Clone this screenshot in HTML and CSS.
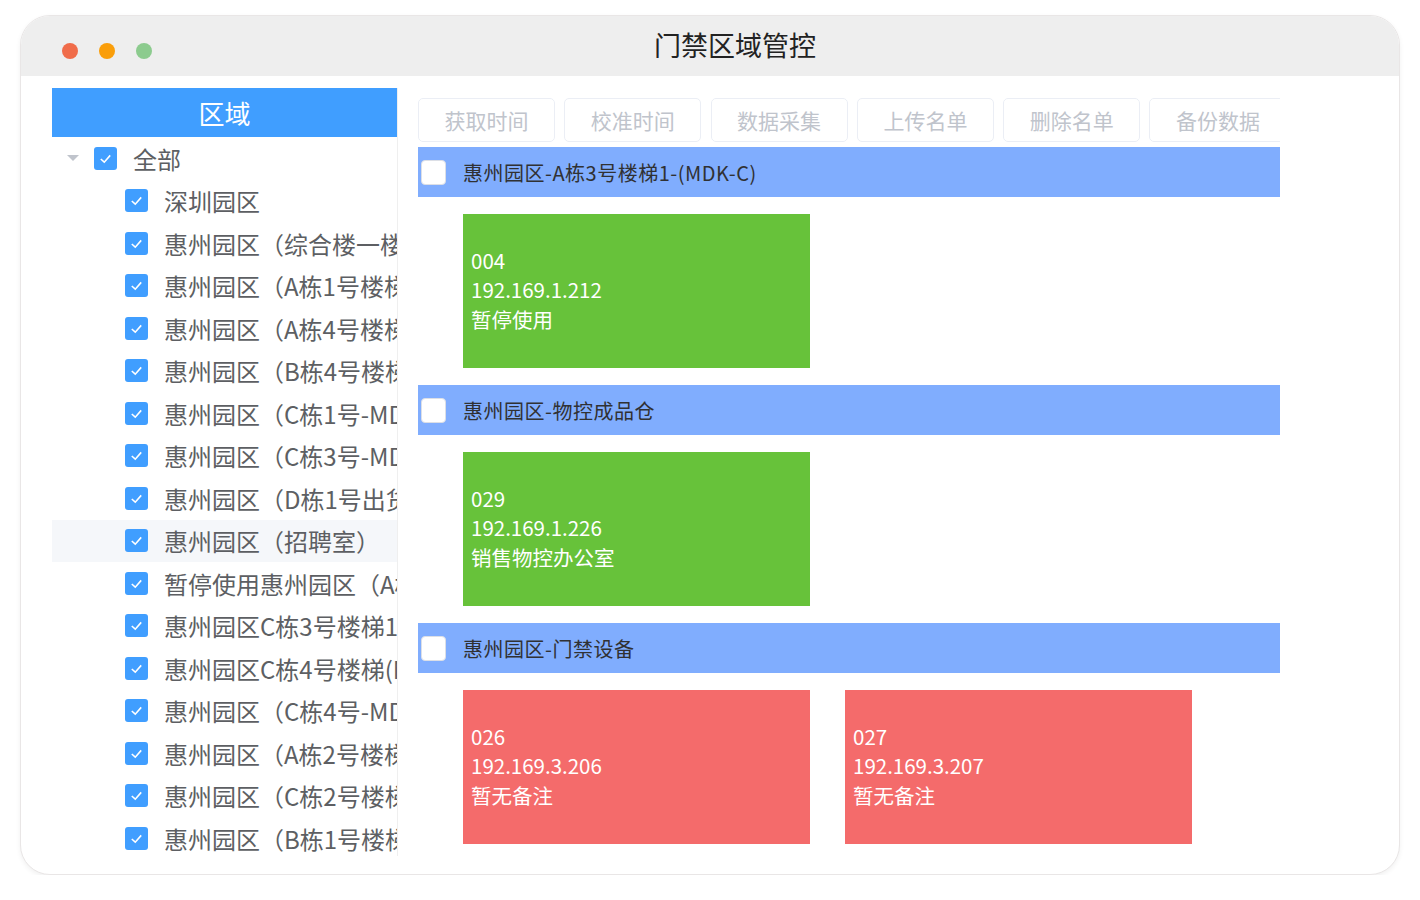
FILE: index.html
```html
<!DOCTYPE html>
<html lang="zh-CN">
<head>
    <meta charset="UTF-8">
    <title>门禁区域管控</title>
    <link rel="stylesheet" href="styles.css">
</head>
<body>
    <div class="window">
        <div class="titlebar">
            <span class="dot red"></span>
            <span class="dot yellow"></span>
            <span class="dot green"></span>
            <h1 class="title">门禁区域管控</h1>
        </div>
        <div class="content">
            <div class="sidebar">
                <div class="sidebar-head">区域</div>
                <ul class="tree">
                    <li class="tree-row root"><span class="caret"></span><span class="cb"><svg viewBox="0 0 22 22"><polyline points="6.5,11.5 9.8,14.5 15.5,8"/></svg></span>全部</li>
                    <li class="tree-row"><span class="cb"><svg viewBox="0 0 22 22"><polyline points="6.5,11.5 9.8,14.5 15.5,8"/></svg></span>深圳园区</li>
                    <li class="tree-row"><span class="cb"><svg viewBox="0 0 22 22"><polyline points="6.5,11.5 9.8,14.5 15.5,8"/></svg></span>惠州园区（综合楼一楼大厅）</li>
                    <li class="tree-row"><span class="cb"><svg viewBox="0 0 22 22"><polyline points="6.5,11.5 9.8,14.5 15.5,8"/></svg></span>惠州园区（A栋1号楼梯）</li>
                    <li class="tree-row"><span class="cb"><svg viewBox="0 0 22 22"><polyline points="6.5,11.5 9.8,14.5 15.5,8"/></svg></span>惠州园区（A栋4号楼梯）</li>
                    <li class="tree-row"><span class="cb"><svg viewBox="0 0 22 22"><polyline points="6.5,11.5 9.8,14.5 15.5,8"/></svg></span>惠州园区（B栋4号楼梯）</li>
                    <li class="tree-row"><span class="cb"><svg viewBox="0 0 22 22"><polyline points="6.5,11.5 9.8,14.5 15.5,8"/></svg></span>惠州园区（C栋1号-MDK）</li>
                    <li class="tree-row"><span class="cb"><svg viewBox="0 0 22 22"><polyline points="6.5,11.5 9.8,14.5 15.5,8"/></svg></span>惠州园区（C栋3号-MDK）</li>
                    <li class="tree-row"><span class="cb"><svg viewBox="0 0 22 22"><polyline points="6.5,11.5 9.8,14.5 15.5,8"/></svg></span>惠州园区（D栋1号出货）</li>
                    <li class="tree-row active"><span class="cb"><svg viewBox="0 0 22 22"><polyline points="6.5,11.5 9.8,14.5 15.5,8"/></svg></span>惠州园区（招聘室）</li>
                    <li class="tree-row"><span class="cb"><svg viewBox="0 0 22 22"><polyline points="6.5,11.5 9.8,14.5 15.5,8"/></svg></span>暂停使用惠州园区（A栋）</li>
                    <li class="tree-row"><span class="cb"><svg viewBox="0 0 22 22"><polyline points="6.5,11.5 9.8,14.5 15.5,8"/></svg></span>惠州园区C栋3号楼梯1</li>
                    <li class="tree-row"><span class="cb"><svg viewBox="0 0 22 22"><polyline points="6.5,11.5 9.8,14.5 15.5,8"/></svg></span>惠州园区C栋4号楼梯(MDK)</li>
                    <li class="tree-row"><span class="cb"><svg viewBox="0 0 22 22"><polyline points="6.5,11.5 9.8,14.5 15.5,8"/></svg></span>惠州园区（C栋4号-MDK）</li>
                    <li class="tree-row"><span class="cb"><svg viewBox="0 0 22 22"><polyline points="6.5,11.5 9.8,14.5 15.5,8"/></svg></span>惠州园区（A栋2号楼梯）</li>
                    <li class="tree-row"><span class="cb"><svg viewBox="0 0 22 22"><polyline points="6.5,11.5 9.8,14.5 15.5,8"/></svg></span>惠州园区（C栋2号楼梯）</li>
                    <li class="tree-row"><span class="cb"><svg viewBox="0 0 22 22"><polyline points="6.5,11.5 9.8,14.5 15.5,8"/></svg></span>惠州园区（B栋1号楼梯）</li>
                </ul>
            </div>
            <div class="main">
                <div class="toolbar">
                    <button class="tool-btn">获取时间</button>
                    <button class="tool-btn">校准时间</button>
                    <button class="tool-btn">数据采集</button>
                    <button class="tool-btn">上传名单</button>
                    <button class="tool-btn">删除名单</button>
                    <button class="tool-btn">备份数据</button>
                </div>

                <div class="group-head"><span class="group-cb"></span>惠州园区-A栋3号楼梯1-(MDK-C)</div>
                <div class="cards">
                    <div class="card ok">
                        <span>004</span>
                        <span>192.169.1.212</span>
                        <span>暂停使用</span>
                    </div>
                </div>

                <div class="group-head"><span class="group-cb"></span>惠州园区-物控成品仓</div>
                <div class="cards">
                    <div class="card ok">
                        <span>029</span>
                        <span>192.169.1.226</span>
                        <span>销售物控办公室</span>
                    </div>
                </div>

                <div class="group-head"><span class="group-cb"></span>惠州园区-门禁设备</div>
                <div class="cards">
                    <div class="card off">
                        <span>026</span>
                        <span>192.169.3.206</span>
                        <span>暂无备注</span>
                    </div>
                    <div class="card off">
                        <span>027</span>
                        <span>192.169.3.207</span>
                        <span>暂无备注</span>
                    </div>
                </div>
            </div>
        </div>
    </div>
</body>
</html>
```

FILE: styles.css
```css
* {
    margin: 0;
    padding: 0;
    box-sizing: border-box;
    font-family: "Noto Sans CJK SC", "Noto Sans", sans-serif;
}

body {
    background: #fff;
    padding: 15px 20px 0;
}

.window {
    width: 1380px;
    height: 860px;
    background: #fff;
    border: 1px solid #e9e6e6;
    border-radius: 30px;
    box-shadow: 0 2px 5px rgba(0, 0, 0, 0.06);
    overflow: hidden;
}

.titlebar {
    height: 60px;
    background: #eeeeee;
    display: flex;
    align-items: center;
    padding-left: 41px;
}

.dot {
    width: 16px;
    height: 16px;
    border-radius: 50%;
    margin-right: 21px;
    margin-top: 10px;
}

.dot.red { background: #f06c4a; }
.dot.yellow { background: #fa9e0a; }
.dot.green { background: #8ccb8e; }

.title {
    margin-left: 481px;
    font-size: 27px;
    font-weight: normal;
    color: #222;
    margin-top: -4px;
}

.content {
    display: flex;
    padding: 12px 0 0 31px;
}

/* left tree */
.sidebar {
    width: 346px;
    height: 768px;
    border-right: 1px solid #efefef;
    overflow: hidden;
    flex-shrink: 0;
}

.sidebar-head {
    height: 49px;
    background: #409eff;
    color: #fff;
    font-size: 26px;
    text-align: center;
    line-height: 50px;
}

.tree {
    list-style: none;
    padding-top: 0;
}

.tree-row {
    height: 42.5px;
    display: flex;
    align-items: center;
    padding-left: 73px;
    font-size: 24px;
    color: #5d5f63;
    white-space: nowrap;
}

.tree-row.root {
    padding-left: 15px;
}

.tree-row.active {
    background: #f5f7fa;
}

.caret {
    width: 0;
    height: 0;
    border-left: 6px solid transparent;
    border-right: 6px solid transparent;
    border-top: 6px solid #c0c4cc;
    margin-right: 15px;
}

.cb {
    width: 23px;
    height: 23px;
    background: #409eff;
    border-radius: 3px;
    margin-right: 16px;
    flex-shrink: 0;
    display: flex;
}

.cb svg {
    width: 23px;
    height: 23px;
    fill: none;
    stroke: #fff;
    stroke-width: 1.5;
}

/* right panel */
.main {
    width: 862px;
    margin-left: 20px;
    padding-top: 10px;
    overflow: hidden;
    flex-shrink: 0;
}

.toolbar {
    display: flex;
    gap: 9.3px;
    white-space: nowrap;
}

.tool-btn {
    width: 137px;
    height: 44px;
    flex-shrink: 0;
    background: #fff;
    border: 1px solid #ebeef5;
    border-radius: 5px;
    color: #c0c4cc;
    font-size: 21px;
}

.group-head {
    margin-top: 5px;
    height: 50px;
    background: #80adfe;
    display: flex;
    align-items: center;
    padding-left: 3px;
    font-size: 20px;
    letter-spacing: 0.5px;
    color: #303133;
}

.group-cb {
    width: 25px;
    height: 25px;
    background: #fff;
    border: 1px solid #dcdfe6;
    border-radius: 4px;
    margin-right: 17px;
}

.cards {
    display: flex;
    gap: 35px;
    padding: 17px 0 12px 45px;
}

.card {
    width: 347px;
    height: 154px;
    display: flex;
    flex-direction: column;
    justify-content: center;
    padding-left: 8px;
    padding-bottom: 2px;
    color: #fff;
    font-size: 20.5px;
    line-height: 29.5px;
}

.card.ok { background: #67c23a; }
.card.off { background: #f46b6b; }
```
